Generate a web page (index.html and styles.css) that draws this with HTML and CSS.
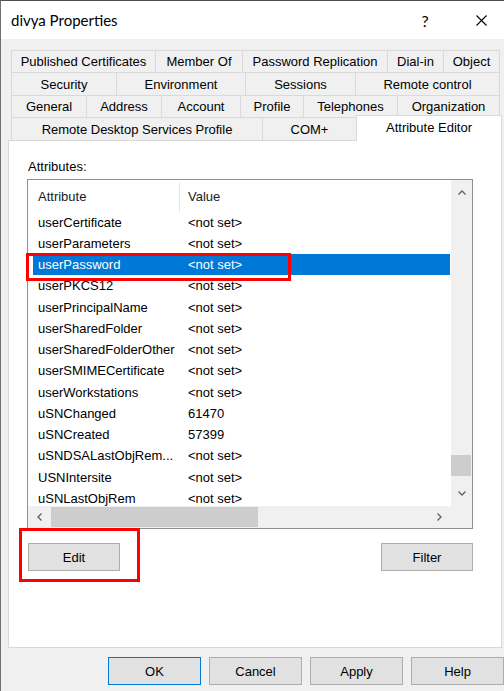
FILE: index.html
```html
<!DOCTYPE html>
<html>
<head>
<meta charset="utf-8">
<title>divya Properties</title>
<link rel="stylesheet" href="styles.css">
</head>
<body>
<div class="window">
  <div class="titlebar">
    <span class="title">divya Properties</span>
    <span class="help">?</span>
    <svg class="close" width="11" height="11" viewBox="0 0 11 11"><path d="M0.5 0.5 L10.5 10.5 M10.5 0.5 L0.5 10.5" stroke="#000" stroke-width="1.1" fill="none"/></svg>
  </div>
  <div class="client">
    <div class="tabs">
      <div class="tabrow">
        <div class="tab t1a">Published Certificates</div>
        <div class="tab t1b">Member Of</div>
        <div class="tab t1c">Password Replication</div>
        <div class="tab t1d">Dial-in</div>
        <div class="tab t1e last">Object</div>
      </div>
      <div class="tabrow r23">
        <div class="tab t2a">Security</div>
        <div class="tab t2b">Environment</div>
        <div class="tab t2c">Sessions</div>
        <div class="tab t2d last">Remote control</div>
      </div>
      <div class="tabrow">
        <div class="tab t3a">General</div>
        <div class="tab t3b">Address</div>
        <div class="tab t3c">Account</div>
        <div class="tab t3d">Profile</div>
        <div class="tab t3e">Telephones</div>
        <div class="tab t3f last">Organization</div>
      </div>
      <div class="tabrow r23">
        <div class="tab t4a">Remote Desktop Services Profile</div>
        <div class="tab t4b">COM+</div>
        <div class="tab t4c selected">Attribute Editor</div>
      </div>
    </div>
    <div class="panel">
      <div class="label">Attributes:</div>
      <div class="listbox">
        <div class="lv">
          <div class="lv-head">
            <div class="h1">Attribute</div>
            <div class="h2">Value</div>
          </div>
          <div class="row"><div class="c1">userCertificate</div><div class="c2">&lt;not set&gt;</div></div>
          <div class="row"><div class="c1">userParameters</div><div class="c2">&lt;not set&gt;</div></div>
          <div class="row sel"><div class="c1">userPassword</div><div class="c2">&lt;not set&gt;</div></div>
          <div class="row"><div class="c1">userPKCS12</div><div class="c2">&lt;not set&gt;</div></div>
          <div class="row"><div class="c1">userPrincipalName</div><div class="c2">&lt;not set&gt;</div></div>
          <div class="row"><div class="c1">userSharedFolder</div><div class="c2">&lt;not set&gt;</div></div>
          <div class="row"><div class="c1">userSharedFolderOther</div><div class="c2">&lt;not set&gt;</div></div>
          <div class="row"><div class="c1">userSMIMECertificate</div><div class="c2">&lt;not set&gt;</div></div>
          <div class="row"><div class="c1">userWorkstations</div><div class="c2">&lt;not set&gt;</div></div>
          <div class="row"><div class="c1">uSNChanged</div><div class="c2">61470</div></div>
          <div class="row"><div class="c1">uSNCreated</div><div class="c2">57399</div></div>
          <div class="row"><div class="c1">uSNDSALastObjRem...</div><div class="c2">&lt;not set&gt;</div></div>
          <div class="row"><div class="c1">USNIntersite</div><div class="c2">&lt;not set&gt;</div></div>
          <div class="row"><div class="c1">uSNLastObjRem</div><div class="c2">&lt;not set&gt;</div></div>
        </div>
        <div class="vscroll">
          <div class="arrow av"><svg width="8" height="5" viewBox="0 0 8 5"><polyline points="0.5,4.5 4,1 7.5,4.5" fill="none" stroke="#606060" stroke-width="1.3"/></svg></div>
          <div class="vtrack"><div class="vthumb"></div></div>
          <div class="arrow av"><svg width="8" height="5" viewBox="0 0 8 5"><polyline points="0.5,0.5 4,4 7.5,0.5" fill="none" stroke="#606060" stroke-width="1.3"/></svg></div>
        </div>
        <div class="hscroll">
          <div class="arrow ah"><svg width="5" height="8" viewBox="0 0 5 8"><polyline points="4.5,0.5 1,4 4.5,7.5" fill="none" stroke="#606060" stroke-width="1.3"/></svg></div>
          <div class="htrack"><div class="hthumb"></div></div>
          <div class="arrow ah"><svg width="5" height="8" viewBox="0 0 5 8"><polyline points="0.5,0.5 4,4 0.5,7.5" fill="none" stroke="#606060" stroke-width="1.3"/></svg></div>
        </div>
        <div class="corner"></div>
      </div>
      <div class="btnrow">
        <button class="btn">Edit</button>
        <button class="btn">Filter</button>
      </div>
    </div>
    <div class="dlgbtns">
      <button class="btn default">OK</button>
      <button class="btn">Cancel</button>
      <button class="btn">Apply</button>
      <button class="btn">Help</button>
    </div>
  </div>
  <div class="mark mark-row"></div>
  <div class="mark mark-edit"></div>
</div>
</body>
</html>
```

FILE: styles.css
```css
* { box-sizing: border-box; }
html, body { margin: 0; padding: 0; }
body {
  width: 504px;
  height: 691px;
  overflow: hidden;
  background: #f0f0f0;
  font-family: "Liberation Sans", Arial, sans-serif;
  font-size: 13px;
  color: #000;
}
.window {
  position: relative;
  width: 504px;
  height: 691px;
  border-left: 1px solid #707070;
  border-top: 1px solid #505050;
  background: #f0f0f0;
}
.titlebar {
  height: 38px;
  background: #fff;
  display: flex;
  align-items: center;
}
.title {
  font-family: Lato, "Noto Sans", sans-serif;
  font-size: 15px;
  padding-left: 10px;
  color: #000;
}
.help {
  margin-left: auto;
  width: 14px;
  text-align: center;
  font-family: Lato, "Noto Sans", sans-serif;
  font-size: 16px;
  margin-right: 44px;
}
.close {
  display: block;
  margin-right: 17px;
}
.client {
  padding: 11px 0 0 10px;
}
.tabs {
  width: 491px;
}
.tabrow {
  display: flex;
  height: 22px;
}
.tabrow.r23 { height: 23px; }
.tab {
  display: flex;
  align-items: center;
  justify-content: center;
  white-space: nowrap;
  background: #f0f0f0;
  border-left: 1px solid #d9d9d9;
  border-top: 1px solid #d9d9d9;
  color: #000;
}
.tab.last { border-right: 1px solid #d9d9d9; }
.t1a { width: 144px; }
.t1b { width: 87px; }
.t1c { width: 145px; }
.t1d { width: 56px; }
.t1e { width: 57px; }
.t2a { width: 105px; }
.t2b { width: 129px; }
.t2c { width: 110px; }
.t2d { width: 145px; }
.t3a { width: 75px; }
.t3b { width: 75px; }
.t3c { width: 79px; }
.t3d { width: 63px; }
.t3e { width: 94px; }
.t3f { width: 103px; }
.t4a { width: 251px; }
.t4b { width: 94px; }
.t4c { width: 146px; }
.tab.selected {
  position: relative;
  z-index: 1;
  height: 26px;
  margin-top: -2px;
  margin-bottom: -1px;
  background: #fff;
  border-right: 1px solid #d9d9d9;
  padding-bottom: 2px;
}
.panel {
  margin-left: -3px;
  width: 494px;
  height: 508px;
  background: #fff;
  border: 1px solid #d9d9d9;
  padding: 18px 0 0 18px;
}
.label {
  height: 15px;
  line-height: 15px;
  padding-left: 1px;
  margin-bottom: 5px;
}
.listbox {
  width: 446px;
  height: 350px;
  border: 1px solid #8e8f94;
  display: grid;
  grid-template-columns: 423px 21px;
  grid-template-rows: 326px 22px;
  background: #fff;
}
.lv {
  overflow: hidden;
  background: #fff;
}
.lv-head {
  height: 31.5px;
  display: flex;
  align-items: flex-end;
  color: #1a1a1a;
}
.h1 {
  width: 152px;
  height: 29.5px;
  padding-left: 10px;
  border-right: 1px solid #e5e5e5;
  display: flex;
  align-items: center;
  padding-bottom: 1px;
}
.h2 {
  height: 29.5px;
  padding-left: 8px;
  display: flex;
  align-items: center;
  padding-bottom: 1px;
}
.row {
  display: flex;
  height: 21.25px;
  line-height: 21.25px;
  white-space: nowrap;
}
.c1 {
  width: 152px;
  padding-left: 10px;
}
.c2 {
  padding-left: 8px;
}
.row.sel {
  margin-left: 5px;
  margin-right: 1px;
  background: #0078d7;
  color: #fff;
}
.row.sel .c1 {
  width: 147px;
  padding-left: 5px;
}
.vscroll {
  background: #f0f0f0;
  display: flex;
  flex-direction: column;
}
.arrow {
  display: flex;
  align-items: center;
  justify-content: center;
}
.arrow svg { display: block; }
.av { height: 25px; }
.vtrack { flex: 1; }
.vthumb {
  margin-top: 250px;
  width: 20px;
  height: 21px;
  background: #cdcdcd;
}
.hscroll {
  background: #f0f0f0;
  display: flex;
}
.ah { width: 23px; }
.htrack { flex: 1; }
.hthumb {
  margin-top: 1px;
  width: 207px;
  height: 20px;
  background: #cdcdcd;
}
.corner { background: #f0f0f0; }
.btnrow {
  width: 446px;
  margin-top: 14px;
  padding-left: 1px;
  display: flex;
  justify-content: space-between;
}
.btn {
  width: 93px;
  height: 28px;
  padding: 0;
  margin: 0;
  background: #e1e1e1;
  border: 1px solid #adadad;
  font-family: "Liberation Sans", Arial, sans-serif;
  font-size: 13px;
  color: #000;
}
.btnrow .btn { width: 92px; }
.dlgbtns {
  display: flex;
  gap: 8px;
  margin-top: 9px;
  padding-left: 97px;
}
.btn.default { border-color: #0078d7; }
.mark {
  position: absolute;
  border: 3px solid #ff0000;
  z-index: 5;
}
.mark-row {
  left: 25px;
  top: 252px;
  width: 265px;
  height: 28px;
}
.mark-edit {
  left: 18px;
  top: 527px;
  width: 121px;
  height: 54px;
}
```
